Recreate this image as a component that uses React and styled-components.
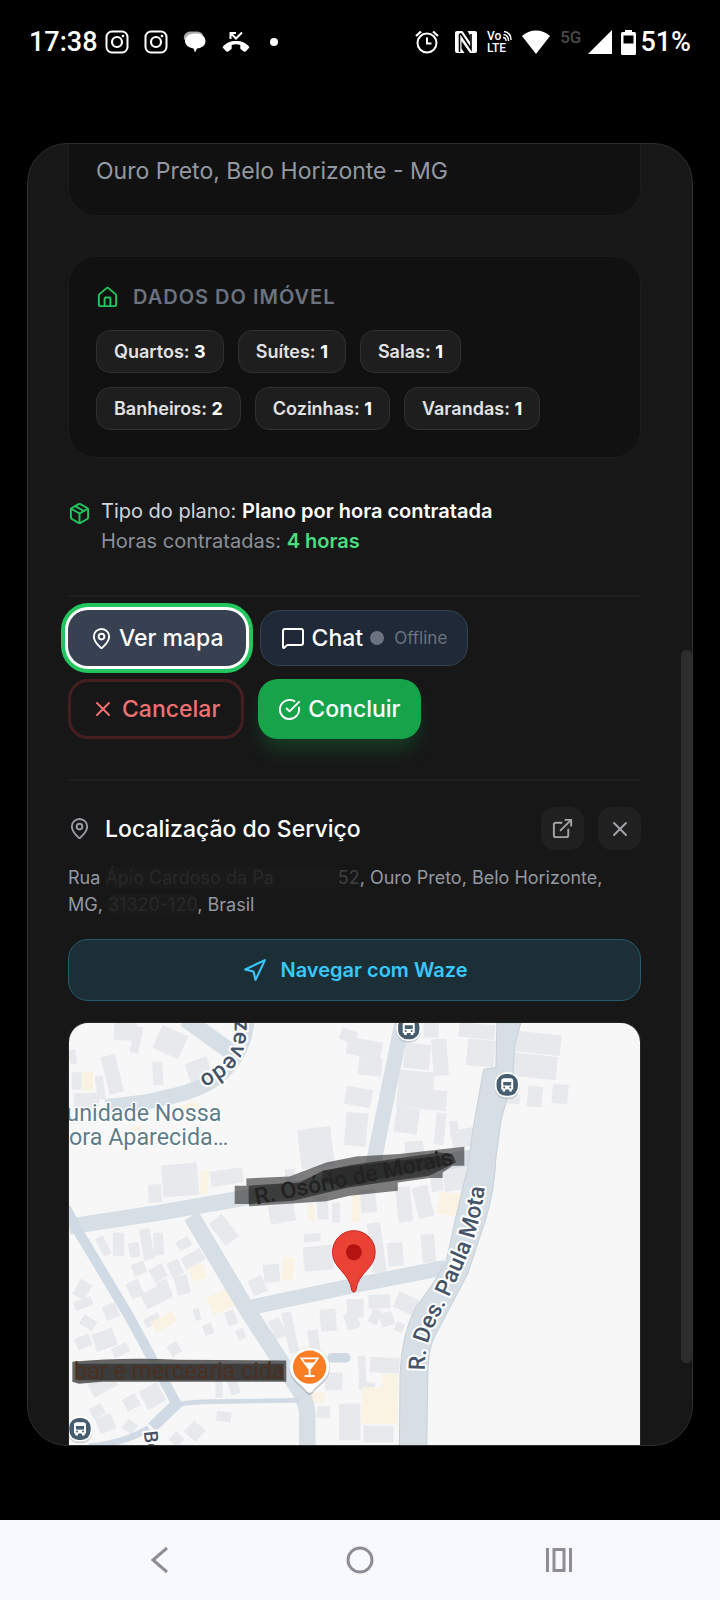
import styled, { createGlobalStyle } from "styled-components";
import {
  House,
  Package,
  MapPin,
  MessageSquare,
  X,
  CircleCheckBig,
  ExternalLink,
  Navigation,
} from "lucide-react";

const GlobalStyle = createGlobalStyle`
  * {
    box-sizing: border-box;
  }
  body {
    margin: 0;
    background: #000;
    font-family: Inter, "Liberation Sans", sans-serif;
  }
  h2, h3, p, ul {
    margin: 0;
    padding: 0;
    font-weight: inherit;
  }
  button {
    font-family: inherit;
    cursor: pointer;
  }
`;

const Screen = styled.div`
  min-height: 100vh;
  display: flex;
  flex-direction: column;
  background: #000;
`;

const StatusBar = styled.header`
  height: 84px;
  padding: 0 29px;
  display: flex;
  align-items: center;
  justify-content: space-between;
  color: #fff;
  font-family: Roboto, sans-serif;
  font-size: 27px;
  font-weight: 500;
`;

const StatusGroup = styled.div`
  display: flex;
  align-items: center;
  gap: ${(props) => props.$gap}px;
  svg {
    display: block;
  }
`;

const Network = styled.span`
  padding-bottom: 10px;
  color: #4a4a4a;
  font-size: 17px;
`;

const Stage = styled.main`
  flex: 1;
  display: flex;
  padding: 59px 27px 74px;
`;

const Modal = styled.div`
  flex: 1;
  display: flex;
  overflow: hidden;
  background: #171717;
  border: 1px solid #2e2e2e;
  border-radius: 40px;
`;

const Content = styled.div`
  flex: 1;
  min-width: 0;
  display: flex;
  flex-direction: column;
  padding: 0 40px;
`;

const Track = styled.div`
  width: 11px;
  display: grid;
  grid-template-rows: 506fr 714fr 82fr;
`;

const Thumb = styled.div`
  grid-row: 2;
  border-radius: 6px;
  background: #2d2d2d;
`;

const Card = styled.section`
  padding: 27px;
  background: #111;
  border: 1px solid #1c1c1c;
  border-radius: 28px;
`;

const AddressCard = styled(Card)`
  padding-top: 10px;
  border-top: 0;
  border-radius: 0 0 28px 28px;
  color: #9498a2;
  font-size: 23px;
  line-height: 34px;
`;

const PropertyCard = styled(Card)`
  margin-top: 40px;
`;

const CardTitle = styled.h2`
  display: flex;
  align-items: center;
  gap: 14px;
  color: #6b7280;
  font-size: 20px;
  line-height: 26px;
  font-weight: 600;
  letter-spacing: 1px;
  svg {
    color: #22c55e;
  }
`;

const Chips = styled.ul`
  margin-top: 20px;
  display: flex;
  flex-wrap: wrap;
  gap: 14px;
  list-style: none;
`;

const Chip = styled.li`
  height: 43px;
  padding: 0 17px;
  display: flex;
  align-items: center;
  background: #1e1e1e;
  border: 1px solid #303030;
  border-radius: 14px;
  color: #e2e2e4;
  font-size: 18px;
  font-weight: 600;
  white-space: pre;
  b {
    color: #fff;
    font-weight: 700;
  }
`;

const Plan = styled.section`
  margin-top: 38px;
  padding-bottom: 39px;
  display: flex;
  gap: 10px;
  border-bottom: 2px solid #1f1f1f;
  font-size: 20px;
  line-height: 30px;
  svg {
    margin-top: 6px;
    color: #22c55e;
  }
`;

const PlanType = styled.p`
  color: #d1d5db;
  b {
    color: #fff;
    font-weight: 600;
  }
`;

const PlanHours = styled.p`
  color: #8b8f98;
  b {
    color: #4ade80;
    font-weight: 600;
  }
`;

const Actions = styled.div`
  padding: 13px 0 40px;
  display: flex;
  flex-direction: column;
  gap: 13px;
  border-bottom: 2px solid #1f1f1f;
`;

const ActionRow = styled.div`
  display: flex;
  gap: 14px;
`;

const ActionButton = styled.button`
  height: 60px;
  padding: 0 20px;
  display: flex;
  align-items: center;
  gap: 7px;
  border: 0;
  border-radius: 20px;
  color: #fff;
  font-size: 23px;
  font-weight: 500;
`;

const MapButton = styled(ActionButton)`
  height: 56px;
  padding: 0 22px;
  gap: 6px;
  background: #374151;
  box-shadow: 0 0 0 3px #fff, 0 0 0 7px #22c55e;
`;

const ChatButton = styled(ActionButton)`
  height: 56px;
  background: #1f2937;
  border: 1px solid #374151;
`;

const CancelButton = styled(ActionButton)`
  padding: 0 21px 0 20px;
  background: transparent;
  border: 3px solid #451f20;
  color: #f07171;
`;

const FinishButton = styled(ActionButton)`
  background: #16a34a;
  box-shadow: 0 14px 20px -4px rgba(22, 163, 74, 0.28);
`;

const Dot = styled.span`
  width: 14px;
  height: 14px;
  border-radius: 50%;
  background: #6b7280;
`;

const Offline = styled.span`
  margin-left: 3px;
  color: #6b7280;
  font-size: 17px;
  font-weight: 400;
`;

const LocationHeader = styled.div`
  margin-top: 26px;
  display: flex;
  align-items: center;
  gap: 14px;
  color: #9a9ca3;
`;

const LocationTitle = styled.h3`
  flex: 1;
  color: #fff;
  font-size: 23px;
  font-weight: 500;
`;

const IconButton = styled.button`
  width: 43px;
  height: 43px;
  padding: 0;
  display: grid;
  place-items: center;
  background: #202020;
  border: 0;
  border-radius: 14px;
  color: #a3a3a8;
`;

const Address = styled.p`
  margin-top: 14px;
  color: #9498a0;
  font-size: 18px;
  line-height: 27px;
`;

const Hidden = styled.span`
  padding: 0 ${(props) => props.$tail || 0}px 0 0;
  border-radius: 6px;
  background: #1a1a1a;
  color: #27282a;
`;

const Faded = styled.span`
  color: #3d3f42;
`;

const WazeButton = styled.button`
  height: 62px;
  margin-top: 21px;
  display: flex;
  align-items: center;
  justify-content: center;
  gap: 14px;
  background: #1c2f37;
  border: 1px solid #235c6d;
  border-radius: 20px;
  color: #38c8fc;
  font-size: 20px;
  font-weight: 600;
`;

const MapFrame = styled.div`
  margin-top: 21px;
  overflow: hidden;
  border: 1px solid #262626;
  border-bottom: 0;
  border-radius: 20px 20px 0 0;
  svg {
    display: block;
    width: 100%;
  }
`;

const NavBar = styled.nav`
  height: 80px;
  padding: 0 133px;
  display: flex;
  align-items: center;
  justify-content: space-between;
  background: #f8f9fe;
`;

const NavButton = styled.button`
  width: 54px;
  height: 54px;
  padding: 0;
  display: grid;
  place-items: center;
  background: none;
  border: 0;
`;

const rooms = [
  ["Quartos", 3],
  ["Suítes", 1],
  ["Salas", 1],
  ["Banheiros", 2],
  ["Cozinhas", 1],
  ["Varandas", 1],
];

// x, y, width, height, rotation
const buildings = [
  [135, 0, 70, 52, 2],
  [190, 10, 26, 80, 12],
  [262, 20, 85, 75, 24],
  [0, 80, 22, 44, -12],
  [108, 96, 44, 116, -14],
  [252, 118, 30, 68, -3],
  [355, 110, 70, 60, -20],
  [8, 148, 30, 52, 0],
  [82, 160, 24, 70, -8],
  [14, 210, 76, 44, 0],
  [280, 424, 108, 96, -5],
  [238, 485, 40, 54, -3],
  [425, 440, 98, 46, -8],
  [692, 315, 100, 120, -7],
  [650, 440, 30, 50, -4],
  [815, 20, 50, 36, 20],
  [835, 50, 105, 52, 10],
  [870, 104, 70, 54, 6],
  [830, 195, 80, 54, 10],
  [830, 270, 66, 100, 5],
  [1065, 0, 46, 44, 0],
  [1007, 62, 78, 76, 6],
  [1092, 48, 46, 110, -4],
  [988, 144, 106, 112, 6],
  [1083, 202, 52, 60, 5],
  [980, 255, 70, 76, 8],
  [1100, 270, 30, 96, 6],
  [1145, 295, 26, 55, -5],
  [1150, 318, 74, 54, -10],
  [1010, 355, 56, 46, -6],
  [1172, 2, 108, 44, 6],
  [1196, 50, 84, 80, 5],
  [1342, 30, 136, 62, 6],
  [1330, 95, 136, 70, 6],
  [1378, 190, 44, 62, 6],
  [1452, 184, 48, 58, 5],
  [1315, 215, 40, 28, 5],
  [985, 492, 44, 106, -6],
  [1040, 490, 48, 95, -14],
  [1085, 430, 36, 76, -10],
  [1125, 425, 72, 78, -8],
  [875, 500, 48, 70, -6],
  [602, 545, 76, 55, -10],
  [745, 520, 34, 70, -4],
  [790, 540, 24, 60, 0],
  [440, 580, 50, 84, -38],
  [90, 640, 26, 60, -28],
  [132, 630, 34, 70, 0],
  [180, 660, 32, 44, -10],
  [218, 618, 32, 94, -10],
  [254, 630, 30, 68, -3],
  [324, 648, 42, 30, -28],
  [190, 720, 40, 36, -20],
  [246, 730, 44, 42, -28],
  [300, 714, 38, 46, -24],
  [340, 690, 66, 38, -28],
  [320, 758, 40, 58, -14],
  [270, 772, 34, 60, -20],
  [222, 800, 62, 50, -26],
  [178, 775, 40, 50, -26],
  [20, 775, 40, 52, 30],
  [15, 830, 56, 26, -20],
  [105, 845, 42, 44, -22],
  [35, 885, 46, 32, 30],
  [74, 925, 66, 54, -20],
  [20, 940, 46, 36, -24],
  [130, 968, 50, 30, -26],
  [376, 858, 18, 36, -14],
  [404, 905, 28, 32, -20],
  [472, 864, 30, 44, -20],
  [504, 920, 24, 30, -24],
  [300, 962, 34, 36, -32],
  [225, 880, 50, 26, -30],
  [705, 670, 88, 74, -5],
  [706, 632, 50, 26, -4],
  [585, 725, 48, 54, -6],
  [545, 765, 44, 50, -24],
  [608, 888, 36, 60, -24],
  [650, 868, 30, 124, -12],
  [755, 860, 48, 66, -5],
  [720, 922, 32, 70, -8],
  [830, 870, 40, 50, -18],
  [900, 816, 66, 42, -2],
  [835, 830, 50, 54, 0],
  [980, 818, 66, 50, 24],
  [905, 860, 30, 44, 24],
  [935, 870, 40, 40, -18],
  [980, 900, 26, 28, 20],
  [905, 600, 40, 150, -8],
  [958, 660, 46, 70, -5],
  [1060, 635, 40, 85, -5],
  [905, 1005, 88, 46, 3],
  [870, 1000, 22, 92, -3],
  [870, 1080, 50, 22, 0],
  [812, 1144, 64, 110, 0],
  [885, 1210, 90, 50, 0],
  [745, 1152, 40, 34, 0],
  [60, 1060, 80, 50, -28],
  [220, 1090, 62, 62, -28],
  [165, 1120, 44, 40, -28],
  [65, 1150, 40, 34, -28],
  [85, 1180, 50, 48, -22],
  [165, 1196, 36, 34, 36],
  [355, 1204, 46, 46, 42],
  [306, 1234, 34, 34, 42],
  [443, 1168, 44, 30, 6],
  [440, 1070, 22, 56, 0],
  [480, 1070, 30, 46, -20],
  [770, 1050, 52, 54, 0],
];

const yellowBuildings = [
  [40, 148, 32, 54, 0],
  [340, 240, 52, 34, -18],
  [190, 310, 26, 14, 0],
  [395, 442, 24, 72, 3],
  [720, 545, 18, 50, 0],
  [850, 515, 26, 84, 0],
  [1110, 510, 66, 68, 6],
  [364, 728, 44, 44, -18],
  [640, 704, 36, 68, 6],
  [420, 808, 76, 56, -26],
  [250, 880, 72, 36, -28],
  [940, 1055, 48, 60, 0],
  [880, 1095, 108, 110, 2],
  [722, 1110, 44, 30, 0],
];

const Block = ({ shape: [x, y, w, h, r], fill }) => (
  <rect
    x={x}
    y={y}
    width={w}
    height={h}
    fill={fill}
    transform={`rotate(${r} ${x + w / 2} ${y + h / 2})`}
  />
);

const BusStop = ({ x, y }) => (
  <g transform={`translate(${x} ${y})`}>
    <rect x="-37" y="-33" width="74" height="76" rx="34" fill="#9aa5ae" opacity="0.45" />
    <rect x="-37" y="-38" width="74" height="76" rx="34" fill="#fff" />
    <rect x="-32" y="-33" width="64" height="66" rx="28" fill="#455d6e" />
    <path
      d="M-18 -12q0 -8 8 -8h20q8 0 8 8v26h-4v6h-8v-6h-12v6h-8v-6h-4z"
      fill="#fff"
    />
    <path d="M-12 -9h24v11h-24z" fill="#455d6e" />
    <circle cx="-9" cy="8" r="3" fill="#455d6e" />
    <circle cx="9" cy="8" r="3" fill="#455d6e" />
  </g>
);

const StreetMap = () => (
  <svg
    viewBox="0 0 1716 1269"
    role="img"
    aria-label="Mapa"
    fontFamily="Roboto, sans-serif"
  >
    <rect width="1716" height="1269" fill="#f7f7f7" />
    {buildings.map((shape, i) => (
      <Block key={i} shape={shape} fill="#e8e9ed" />
    ))}
    {yellowBuildings.map((shape, i) => (
      <Block key={i} shape={shape} fill="#faf3e4" />
    ))}

    <g fill="none" stroke="#d6dfe5" strokeWidth="46" strokeLinejoin="round">
      <path d="M350 -12L500 96" strokeWidth="50" />
      <path d="M534 -10Q530 80 460 150Q420 190 330 215L230 238L110 252" />
      <path d="M1003 -10L905 470" />
      <path d="M0 612L273 570L533 525L843 470L1230 400" strokeWidth="48" />
      <path d="M368 580L533 858L673 1074Q716 1130 716 1180V1274" strokeWidth="50" />
      <path d="M540 856L850 790L1133 735" />
      <path d="M790 1006H832" strokeWidth="28" strokeLinecap="round" stroke="#cfd9e4" />
    </g>
    <g fill="none" stroke="#d0dae5" strokeWidth="30" strokeLinejoin="round">
      <path d="M-10 555L30 630L180 880L326 1150" />
      <path d="M330 1138L250 1215" strokeWidth="34" />
      <path d="M240 1218Q170 1262 60 1274" strokeWidth="20" />
      <path d="M330 1146Q370 1138 430 1138L690 1134" strokeWidth="14" />
    </g>
    <path
      d="M1286 0L1283 134L1246 139L1215 314L1198 434L1158 604L1133 719L1093 784L1043 854Q1000 930 995 1054L993 1274H1075L1078 1074Q1078 980 1098 944L1198 754L1251 594Q1280 500 1283 404L1298 294L1333 164L1340 64L1358 0Z"
      fill="#d6dfe5"
      stroke="#c6d0d8"
      strokeWidth="3"
    />

    <path id="azevedo" d="M497 -10Q502 66 470 106Q445 138 376 166" fill="none" />
    <path
      id="paulaMota"
      d="M1070 1044Q1066 970 1106 894L1142 824L1197 700Q1244 590 1258 420"
      fill="none"
    />
    <path id="osorio" d="M563 546L860 486L1240 408" fill="none" />
    <g
      fill="#455468"
      fontSize="69"
      fontWeight="500"
      stroke="#fff"
      strokeWidth="12"
      strokeLinejoin="round"
      paintOrder="stroke"
    >
      <text>
        <textPath href="#azevedo">zevedo</textPath>
      </text>
      <text>
        <textPath href="#paulaMota">R. Des. Paula Mota</textPath>
      </text>
      <text transform="translate(225 1228) rotate(84)" fontSize="58">
        Bo
      </text>
    </g>
    <g
      fill="#607d8a"
      fontSize="70"
      stroke="#fff"
      strokeWidth="8"
      strokeLinejoin="round"
      paintOrder="stroke"
    >
      <text x="-8" y="294">unidade Nossa</text>
      <text x="0" y="366">ora Aparecida…</text>
    </g>

    <path
      d="M498 489H533V467L663 461L773 419L863 401L993 394L1188 372V429H1153L1123 449V466H1083L988 479V504L843 519L773 536L541 551V544H498Z"
      fill="#222"
      opacity="0.58"
    />
    <path
      d="M540 489L693 479L763 444L853 426L1113 389L1153 394L1163 419L1083 459L843 494L673 534L540 544Z"
      fill="#222"
      opacity="0.66"
    />
    <path d="M763 444L853 430L1113 400L1140 425L843 488L760 480Z" fill="#222" opacity="0.6" />
    <text fill="#222" fontSize="69" fontWeight="500">
      <textPath href="#osorio">R. Osório de Morais</textPath>
    </text>

    <path
      d="M10 1018Q160 1004 330 1012L653 1014V1078H450L100 1078L30 1084L10 1078Z"
      fill="#4a4a4a"
      opacity="0.85"
    />
    <path d="M20 1024H645V1074H20Z" fill="#353535" opacity="0.85" />
    <text x="15" y="1070" fill="#4a3022" fontSize="70">
      bar e mercearia cida
    </text>

    <BusStop x={1021} y={16} />
    <BusStop x={1317} y={186} />
    <BusStop x={33} y={1220} />

    <path
      d="M723 980a60 60 0 0 1 60 60c0 36 -34 50 -50 72q-10 12 -20 0c-16 -22 -50 -36 -50 -72a60 60 0 0 1 60 -60z"
      fill="#8d949b"
      opacity="0.55"
    />
    <path
      d="M723 974a60 60 0 0 1 60 60c0 36 -34 50 -50 72q-10 12 -20 0c-16 -22 -50 -36 -50 -72a60 60 0 0 1 60 -60z"
      fill="#fff"
      stroke="#d3d6da"
      strokeWidth="2"
    />
    <circle cx="723" cy="1034" r="50" fill="#fa7e24" />
    <path d="M698 1008H748L726 1038H720Z" fill="none" stroke="#fff" strokeWidth="5" />
    <path d="M706 1020H740L723 1040ZM720 1038H726V1058H738V1064H708V1058H720Z" fill="#fff" />

    <path
      d="M856 624a64 64 0 0 1 64 66c0 48 -52 60 -58 114q-6 10 -12 0c-6 -54 -58 -66 -58 -114a64 64 0 0 1 64 -66z"
      fill="#ea4335"
      stroke="#c5221f"
      strokeWidth="3"
    />
    <circle cx="856" cy="689" r="24" fill="#b31412" />
  </svg>
);

const Instagram = () => (
  <svg width="24" height="24" viewBox="0 0 24 24" fill="none" stroke="#fff">
    <rect x="1.5" y="1.5" width="21" height="21" rx="5.5" strokeWidth="2" />
    <circle cx="12" cy="12" r="5" strokeWidth="2.2" />
    <circle cx="18" cy="6" r="1.3" fill="#fff" stroke="none" />
  </svg>
);

const Messages = () => (
  <svg width="24" height="24" viewBox="0 0 24 24">
    <path d="M1 9C0 4 4 1.500 8 1.500H14C17 1.500 19 3 20 5L6 9L4 13Z" fill="#aaa" />
    <path
      d="M11.500 3.500H13.500C18.500 3.500 22.500 6.500 22.500 11C22.500 15.500 19 18 14 18.500L12 22.500L10.500 18.500C5.500 17.500 2 15 2 11C2 6.500 6.500 3.500 11.500 3.500Z"
      fill="#fff"
    />
  </svg>
);

const MissedCall = () => (
  <svg width="28" height="24" viewBox="0 0 28 24">
    <path
      d="M8.500 9V3H14M9 3.500L14 8.500L20 2.500"
      fill="none"
      stroke="#fff"
      strokeWidth="2"
    />
    <path
      d="M14 11C20 11 24 13 27 16.500Q27.700 17.300 27 18L23.500 21.500Q22.700 22.200 21.800 21.500L18.800 19.300Q18.300 18.800 18.300 18V15Q14 13.500 9.700 15V18Q9.700 18.800 9.200 19.300L6.200 21.500Q5.300 22.200 4.500 21.500L1 18Q.3 17.300 1 16.500C4 13 8 11 14 11Z"
      fill="#fff"
    />
  </svg>
);

const Alarm = () => (
  <svg width="24" height="24" viewBox="0 0 24 24" fill="none" stroke="#fff" strokeWidth="2">
    <circle cx="12" cy="13" r="9.500" />
    <path d="M12 7.500V13.500H16.500" />
    <path d="M1 6L6 1.500M23 6L18 1.500" strokeWidth="2.300" />
  </svg>
);

const Nfc = () => (
  <svg width="22" height="22" viewBox="0 0 22 22">
    <path d="M2 0H7.500L15 11V4.500L12.500 0H20Q22 0 22 2V20Q22 22 20 22H15L6.500 10V17.500L9.500 22H2Q0 22 0 20V2Q0 0 2 0Z" fill="#fff" />
    <path d="M4.500 21V3.500L6 3L16 18V3" fill="none" stroke="#000" strokeWidth="1.600" />
  </svg>
);

const VoLte = () => (
  <svg
    width="26"
    height="26"
    viewBox="0 0 26 26"
    fill="#fff"
    fontFamily="Roboto, sans-serif"
    fontWeight="500"
    fontSize="12"
  >
    <text x="1" y="11">Vo</text>
    <text x="1" y="23">LTE</text>
    <path
      d="M17 8.500Q20 8.500 20 12M17.500 5.500Q22.500 6 22.500 12M18 2.500Q25 3.500 25 11"
      fill="none"
      stroke="#fff"
      strokeWidth="1.400"
    />
  </svg>
);

const Wifi = () => (
  <svg width="30" height="24" viewBox="0 0 30 24">
    <path d="M1 6C8 -1.500 22 -1.500 29 6L15 24Z" fill="#fff" />
  </svg>
);

const Signal = () => (
  <svg width="24" height="24" viewBox="0 0 24 24">
    <path d="M24 0V24H0Z" fill="#fff" />
  </svg>
);

const Battery = () => (
  <svg width="15" height="25" viewBox="0 0 15 25">
    <path
      d="M4 0H11V2H13.500Q15 2 15 3.500V23.500Q15 25 13.500 25H1.500Q0 25 0 23.500V3.500Q0 2 1.500 2H4ZM2.500 5.500V13.500H12.500V5.500Z"
      fill="#fff"
      fillRule="evenodd"
    />
  </svg>
);

const PhoneStatus = () => (
  <StatusBar>
    <StatusGroup $gap={15}>
      <StatusGroup $gap={7}>
        <span>17:38</span>
        <Instagram />
      </StatusGroup>
      <Instagram />
      <Messages />
      <MissedCall />
      <svg width="18" height="8" viewBox="0 0 18 8">
        <circle cx="9" cy="4" r="4" fill="#fff" />
      </svg>
    </StatusGroup>
    <StatusGroup $gap={9}>
      <StatusGroup $gap={16}>
        <Alarm />
        <Nfc />
      </StatusGroup>
      <VoLte />
      <Wifi />
      <StatusGroup $gap={7}>
        <Network>5G</Network>
        <Signal />
      </StatusGroup>
      <StatusGroup $gap={4}>
        <Battery />
        <span>51%</span>
      </StatusGroup>
    </StatusGroup>
  </StatusBar>
);

const PhoneNav = () => (
  <NavBar>
    <NavButton aria-label="Voltar">
      <svg width="28" height="28" fill="none" stroke="#8e8e92" strokeWidth="3">
        <path d="M21 2L7 14L21 26" />
      </svg>
    </NavButton>
    <NavButton aria-label="Início">
      <svg width="28" height="28" fill="none" stroke="#8e8e92" strokeWidth="3">
        <circle cx="14" cy="14" r="12" />
      </svg>
    </NavButton>
    <NavButton aria-label="Recentes">
      <svg width="28" height="28" fill="none" stroke="#8e8e92" strokeWidth="3">
        <path d="M1.500 2V26M24.500 2V26M8 3.500H18V24.500H8Z" />
      </svg>
    </NavButton>
  </NavBar>
);

export default function App() {
  return (
    <>
      <GlobalStyle />
      <Screen>
        <PhoneStatus />
        <Stage>
          <Modal>
            <Content>
              <AddressCard>
                <p>Ouro Preto, Belo Horizonte - MG</p>
              </AddressCard>

              <PropertyCard>
                <CardTitle>
                  <House size={23} />
                  DADOS DO IMÓVEL
                </CardTitle>
                <Chips>
                  {rooms.map(([name, count]) => (
                    <Chip key={name}>
                      {name}: <b>{count}</b>
                    </Chip>
                  ))}
                </Chips>
              </PropertyCard>

              <Plan>
                <Package size={23} />
                <div>
                  <PlanType>
                    Tipo do plano: <b>Plano por hora contratada</b>
                  </PlanType>
                  <PlanHours>
                    Horas contratadas: <b>4 horas</b>
                  </PlanHours>
                </div>
              </Plan>

              <Actions>
                <ActionRow>
                  <MapButton>
                    <MapPin size={23} />
                    Ver mapa
                  </MapButton>
                  <ChatButton>
                    <MessageSquare size={24} />
                    Chat
                    <Dot />
                    <Offline>Offline</Offline>
                  </ChatButton>
                </ActionRow>
                <ActionRow>
                  <CancelButton>
                    <X size={24} />
                    Cancelar
                  </CancelButton>
                  <FinishButton>
                    <CircleCheckBig size={23} />
                    Concluir
                  </FinishButton>
                </ActionRow>
              </Actions>

              <LocationHeader>
                <MapPin size={23} />
                <LocationTitle>Localização do Serviço</LocationTitle>
                <IconButton aria-label="Abrir">
                  <ExternalLink size={23} />
                </IconButton>
                <IconButton aria-label="Fechar">
                  <X size={24} />
                </IconButton>
              </LocationHeader>
              <Address>
                Rua <Hidden $tail={64}>Ápio Cardoso da Pa</Hidden>
                <Faded>52</Faded>, Ouro Preto, Belo Horizonte, MG,{" "}
                <Hidden>31320-120</Hidden>, Brasil
              </Address>
              <WazeButton>
                <Navigation size={25} />
                Navegar com Waze
              </WazeButton>
              <MapFrame>
                <StreetMap />
              </MapFrame>
            </Content>
            <Track>
              <Thumb />
            </Track>
          </Modal>
        </Stage>
        <PhoneNav />
      </Screen>
    </>
  );
}
